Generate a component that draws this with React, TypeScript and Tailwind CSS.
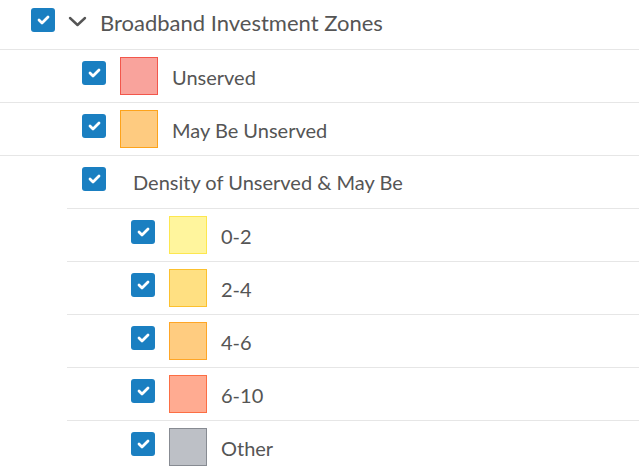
import React from "react";

function Check() {
  return (
    <div className="flex h-[24px] w-[24px] shrink-0 items-center justify-center rounded-[3px] bg-[#1a7fc1]">
      <svg width="13" height="10" viewBox="0 0 13 10">
        <polyline points="2,5 5,8 11,2" fill="none" stroke="white" strokeWidth="2.8" strokeLinecap="round" strokeLinejoin="round" />
      </svg>
    </div>
  );
}

function Swatch({ fill, border }: { fill: string; border: string }) {
  return <div className={`h-[38px] w-[38px] shrink-0 border ${fill} ${border}`} />;
}

const sub = [
  { label: "0-2", fill: "bg-[#fff59d]", border: "border-[#fde74f]" },
  { label: "2-4", fill: "bg-[#ffe082]", border: "border-[#fcc12e]" },
  { label: "4-6", fill: "bg-[#ffcc80]", border: "border-[#ffa626]" },
  { label: "6-10", fill: "bg-[#ffab91]", border: "border-[#fc6e44]" },
  { label: "Other", fill: "bg-[#bdc0c6]", border: "border-[#878b92]" },
];

export default function App() {
  return (
    <div className="h-[473px] w-[639px] overflow-hidden bg-white text-[#555555]" style={{ fontFamily: "Lato, 'Open Sans', sans-serif" }}>
      <div className="flex h-[49px] items-center pb-[9px] pl-[31px]">
        <Check />
        <svg className="ml-[13px] mt-[3px]" width="19" height="11" viewBox="0 0 19 11">
          <polyline points="2,2 9.5,9 17,2" fill="none" stroke="#555" strokeWidth="2.4" strokeLinecap="round" strokeLinejoin="round" />
        </svg>
        <span className="ml-[13px] mt-[4px] text-[22px]">Broadband Investment Zones</span>
      </div>
      <div className="flex h-[53px] items-center border-t border-[#e6e6e6] pl-[82px]">
        <div className="mb-[6px]"><Check /></div>
        <div className="ml-[14px]"><Swatch fill="bg-[#f9a39c]" border="border-[#f2564b]" /></div>
        <span className="ml-[14px] mt-[1px] text-[20px]">Unserved</span>
      </div>
      <div className="flex h-[53px] items-center border-t border-[#e6e6e6] pl-[82px]">
        <div className="mb-[6px]"><Check /></div>
        <div className="ml-[14px]"><Swatch fill="bg-[#fecb80]" border="border-[#fda31b]" /></div>
        <span className="ml-[14px] mt-[1px] text-[20px]">May Be Unserved</span>
      </div>
      <div className="flex h-[53px] items-center border-t border-[#e6e6e6] pl-[82px]">
        <div className="mb-[6px]"><Check /></div>
        <span className="ml-[27px] text-[20px]">Density of Unserved &amp; May Be</span>
      </div>
      <div className="ml-[67px]">
        {sub.map((s) => (
          <div key={s.label} className="flex h-[53px] items-center border-t border-[#e6e6e6] pl-[64px]">
            <div className="mb-[6px]"><Check /></div>
            <div className="ml-[14px]"><Swatch fill={s.fill} border={s.border} /></div>
            <span className="ml-[14px] mt-[1px] text-[20px]">{s.label}</span>
          </div>
        ))}
      </div>
    </div>
  );
}
